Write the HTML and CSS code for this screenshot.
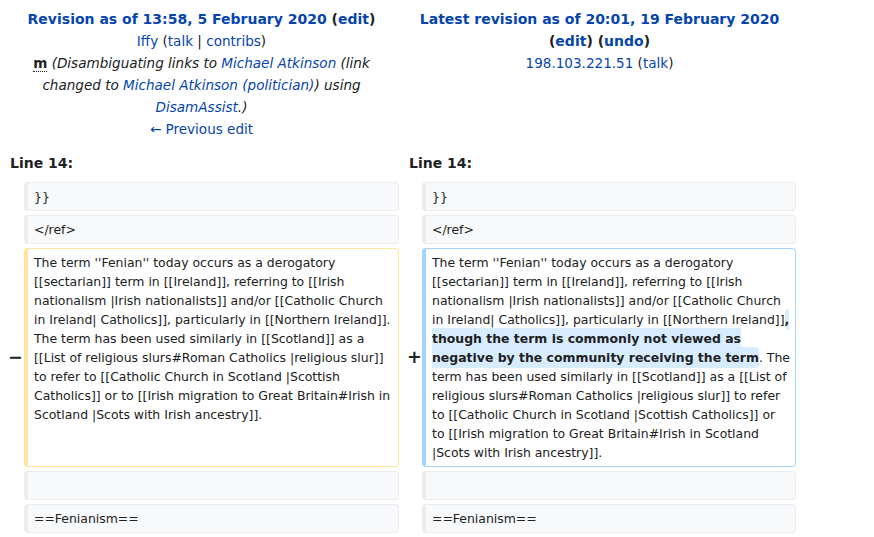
FILE: index.html
```html
<!DOCTYPE html>
<html lang="en">
<head>
<meta charset="utf-8">
<title>Fenian: Difference between revisions</title>
<link rel="stylesheet" href="styles.css">
</head>
<body>
<div class="diff">
  <div class="title otitle">
    <div class="title-line"><strong><a href="#">Revision as of 13:58, 5 February 2020</a> (<a href="#">edit</a>)</strong></div>
    <div class="meta-line"><a href="#">Iffy</a> (<a href="#">talk</a> | <a href="#">contribs</a>)</div>
    <div class="meta-line"><abbr class="minor" title="This is a minor edit">m</abbr> <span class="comment">(Disambiguating links to <a href="#">Michael Atkinson</a> (link changed to <a href="#">Michael Atkinson (politician)</a>) using <a href="#">DisamAssist</a>.)</span></div>
    <div class="meta-line"><a href="#">← Previous edit</a></div>
  </div>
  <div class="title ntitle">
    <div class="title-line"><strong><a href="#">Latest revision as of 20:01, 19 February 2020</a> (<a href="#">edit</a>) (<a href="#">undo</a>)</strong></div>
    <div class="meta-line"><a href="#">198.103.221.51</a> (<a href="#">talk</a>)</div>
  </div>

  <div class="lineno left">Line 14:</div>
  <div class="lineno right">Line 14:</div>

  <div class="marker"></div>
  <div class="cell context">}}</div>
  <div class="marker"></div>
  <div class="cell context">}}</div>

  <div class="marker"></div>
  <div class="cell context">&lt;/ref&gt;</div>
  <div class="marker"></div>
  <div class="cell context">&lt;/ref&gt;</div>

  <div class="marker">−</div>
  <div class="cell deleted">The term ''Fenian'' today occurs as a derogatory [[sectarian]] term in [[Ireland]], referring to [[Irish nationalism |Irish nationalists]] and/or [[Catholic Church in Ireland| Catholics]], particularly in [[Northern Ireland]]. The term has been used similarly in [[Scotland]] as a [[List of religious slurs#Roman Catholics |religious slur]] to refer to [[Catholic Church in Scotland |Scottish Catholics]] or to [[Irish migration to Great Britain#Irish in Scotland |Scots with Irish ancestry]].</div>
  <div class="marker">+</div>
  <div class="cell added">The term ''Fenian'' today occurs as a derogatory [[sectarian]] term in [[Ireland]], referring to [[Irish nationalism |Irish nationalists]] and/or [[Catholic Church in Ireland| Catholics]], particularly in [[Northern Ireland]]<ins class="diffchange">, though the term is commonly not viewed as negative by the community receiving the term</ins>. The term has been used similarly in [[Scotland]] as a [[List of religious slurs#Roman Catholics |religious slur]] to refer to [[Catholic Church in Scotland |Scottish Catholics]] or to [[Irish migration to Great Britain#Irish in Scotland |Scots with Irish ancestry]].</div>

  <div class="marker"></div>
  <div class="cell context"><br></div>
  <div class="marker"></div>
  <div class="cell context"><br></div>

  <div class="marker"></div>
  <div class="cell context">==Fenianism==</div>
  <div class="marker"></div>
  <div class="cell context">==Fenianism==</div>
</div>
</body>
</html>
```

FILE: styles.css
```css
html, body {
  margin: 0;
  padding: 0;
  background: #ffffff;
}

body {
  font-family: "DejaVu Sans", sans-serif;
  font-size: 14px;
  color: #202122;
}

a {
  color: #0645ad;
  text-decoration: none;
}

.diff {
  display: grid;
  grid-template-columns: 16px 375px 15px 374px;
  column-gap: 4px;
  row-gap: 4px;
  padding: 4px 0 0 4px;
}

.title {
  text-align: center;
  line-height: 22px;
  padding-top: 4px;
}

.title-line {
  font-size: 14px;
}

.meta-line {
  font-size: 13.55px;
}

.otitle {
  grid-column: 1 / 3;
}

.ntitle {
  grid-column: 3 / 5;
}

.minor {
  font-weight: bold;
  text-decoration: none;
  border-bottom: 1px dotted #202122;
  cursor: help;
}

.comment {
  font-style: italic;
}

.lineno {
  font-weight: bold;
  line-height: 22px;
  padding: 8px 0 4px 6px;
}

.lineno.left {
  grid-column: 1 / 3;
}

.lineno.right {
  grid-column: 3 / 5;
}

.marker {
  display: flex;
  align-items: center;
  font-size: 17.5px;
  font-weight: bold;
  line-height: 1.2;
  padding-left: 4px;
  white-space: nowrap;
  overflow: visible;
}

.cell {
  font-size: 12.45px;
  line-height: 19px;
  padding: 4px 5px 4px 6px;
  border-style: solid;
  border-width: 1px 1px 1px 4px;
  border-radius: 4px;
  overflow-wrap: break-word;
  color: #202122;
}

.context {
  background: #f8f9fa;
  border-color: #eaecf0;
}

.deleted {
  background: #ffffff;
  border-color: #ffe49c;
}

.added {
  background: #ffffff;
  border-color: #a3d3ff;
}

.diffchange {
  text-decoration: none;
  font-weight: bold;
  background: #d8ecff;
  border-radius: 4px;
  padding: 0.25em 0;
}
```
